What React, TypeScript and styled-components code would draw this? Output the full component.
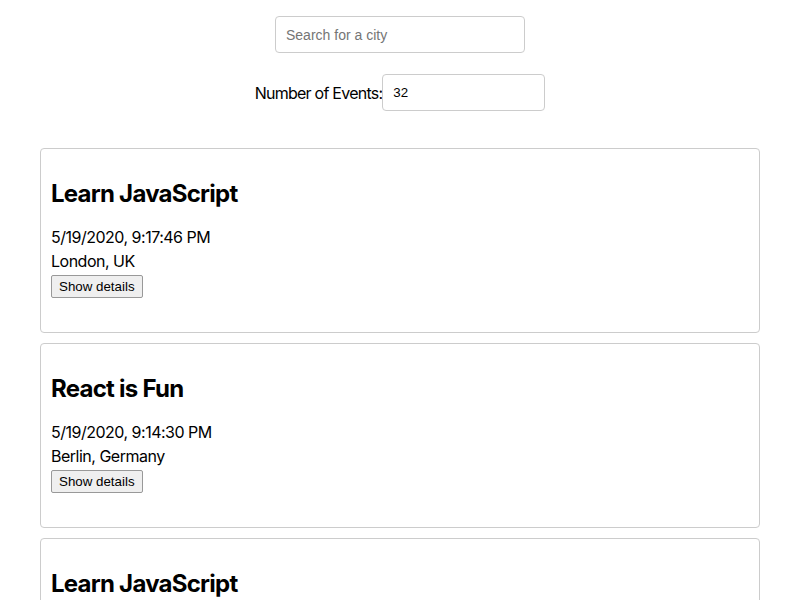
import React from "react";
import styled, { createGlobalStyle } from "styled-components";

const Global = createGlobalStyle`
  body {
    margin: 8px;
    font-family: Inter, "Noto Sans", sans-serif;
    font-size: 16px;
    background: #fff;
    color: #000;
  }
`;

const Page = styled.div`
  display: flex;
  flex-direction: column;
  align-items: center;
`;

const SearchBox = styled.input`
  box-sizing: border-box;
  width: 250px;
  height: 37px;
  margin-top: 8px;
  padding: 8px 10px;
  border: 1px solid #ccc;
  border-radius: 4px;
  font-family: "Liberation Sans", Arial, sans-serif;
  font-size: 14px;
  color: #000;
  outline: none;
  &::placeholder {
    color: #757575;
  }
`;

const NumberRow = styled.div`
  display: flex;
  align-items: center;
  margin-top: 21px;
`;

const NumberLabel = styled.label`
  font-family: Inter, sans-serif;
  font-size: 16px;
  letter-spacing: -0.75px;
`;

const NumberInput = styled.input`
  box-sizing: border-box;
  width: 163px;
  height: 37px;
  padding: 8px 10px;
  border: 1px solid #ccc;
  border-radius: 4px;
  font-family: "Liberation Sans", Arial, sans-serif;
  font-size: 13.33px;
  color: #000;
  outline: none;
`;

const EventList = styled.ul`
  list-style: none;
  margin: 37px 0 0;
  padding: 0 32px;
  align-self: stretch;
  display: flex;
  flex-direction: column;
  gap: 10px;
`;

const EventCard = styled.li`
  box-sizing: border-box;
  border: 1px solid #ccc;
  border-radius: 4px;
  padding: 10px;
  height: 185px;
`;

const EventTitle = styled.h2`
  font-size: 24px;
  font-weight: 700;
  letter-spacing: -0.75px;
  margin: 20px 0 17px;
  line-height: 29px;
`;

const EventLine = styled.p`
  margin: 0;
  font-size: 16px;
  letter-spacing: -0.5px;
  line-height: 24px;
`;

const DetailsButton = styled.button`
  box-sizing: border-box;
  height: 23px;
  font-family: "Liberation Sans", Arial, sans-serif;
  font-size: 13.33px;
  margin-top: 2px;
  padding: 0 7px;
  background: #efefef;
  border: 1px solid #999;
  border-radius: 2px;
  color: #000;
`;

const events = [
  { title: "Learn JavaScript", date: "5/19/2020, 9:17:46 PM", place: "London, UK" },
  { title: "React is Fun", date: "5/19/2020, 9:14:30 PM", place: "Berlin, Germany" },
  { title: "Learn JavaScript", date: "5/19/2020, 9:17:46 PM", place: "London, UK" },
];

export default function App() {
  return (
    <>
      <Global />
      <Page>
        <SearchBox placeholder="Search for a city" />
        <NumberRow>
          <NumberLabel>Number of Events:</NumberLabel>
          <NumberInput type="text" defaultValue="32" />
        </NumberRow>
        <EventList>
          {events.map((e, i) => (
            <EventCard key={i}>
              <EventTitle>{e.title}</EventTitle>
              <EventLine>{e.date}</EventLine>
              <EventLine>{e.place}</EventLine>
              <DetailsButton>Show details</DetailsButton>
            </EventCard>
          ))}
        </EventList>
      </Page>
    </>
  );
}
